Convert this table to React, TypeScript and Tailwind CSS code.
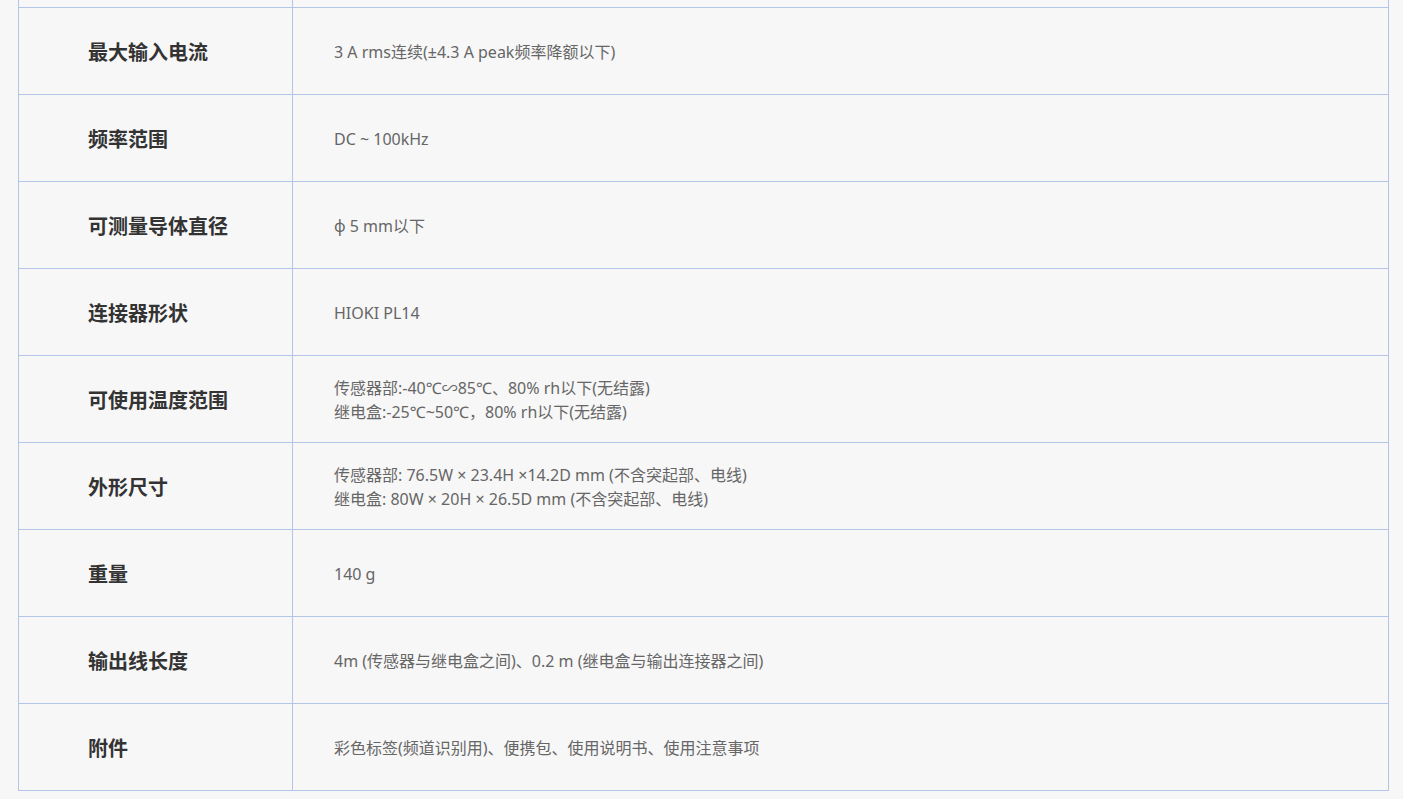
import React from 'react';

interface SpecRow {
  label: string;
  value: React.ReactNode;
}

const rows: SpecRow[] = [
  { label: '最大输入电流', value: '3 A rms连续(±4.3 A peak频率降额以下)' },
  { label: '频率范围', value: 'DC ~ 100kHz' },
  { label: '可测量导体直径', value: 'φ 5 mm以下' },
  { label: '连接器形状', value: 'HIOKI PL14' },
  {
    label: '可使用温度范围',
    value: (
      <>
        传感器部:-40℃∽85℃、80% rh以下(无结露)
        <br />
        继电盒:-25℃~50℃，80% rh以下(无结露)
      </>
    ),
  },
  {
    label: '外形尺寸',
    value: (
      <>
        传感器部: 76.5W × 23.4H ×14.2D mm (不含突起部、电线)
        <br />
        继电盒: 80W × 20H × 26.5D mm (不含突起部、电线)
      </>
    ),
  },
  { label: '重量', value: '140 g' },
  { label: '输出线长度', value: '4m (传感器与继电盒之间)、0.2 m (继电盒与输出连接器之间)' },
  { label: '附件', value: '彩色标签(频道识别用)、便携包、使用说明书、使用注意事项' },
];

const Row: React.FC<SpecRow> = ({ label, value }) => (
  <div className="flex h-[87px] border-b border-[#b4c6e7]">
    <div className="flex w-[274px] shrink-0 items-center border-r border-[#b4c6e7] pt-[3px] pl-[69px] text-[20px] font-bold text-[#333333]">
      {label}
    </div>
    <div className="flex flex-1 items-center pt-[2px] pl-[41px] text-[16px] leading-[24px] text-[#666666]">
      <div>{value}</div>
    </div>
  </div>
);

export default function App() {
  return (
    <div
      className="h-[799px] overflow-hidden bg-[#f7f7f7] pl-[18px] pr-[14px]"
      style={{ fontFamily: '"Noto Sans", "Noto Sans CJK SC", sans-serif' }}
    >
      <div className="-mt-[79px] border-l border-r border-[#b4c6e7]">
        <Row label="" value="" />
        {rows.map((row, i) => (
          <Row key={i} {...row} />
        ))}
      </div>
    </div>
  );
}
